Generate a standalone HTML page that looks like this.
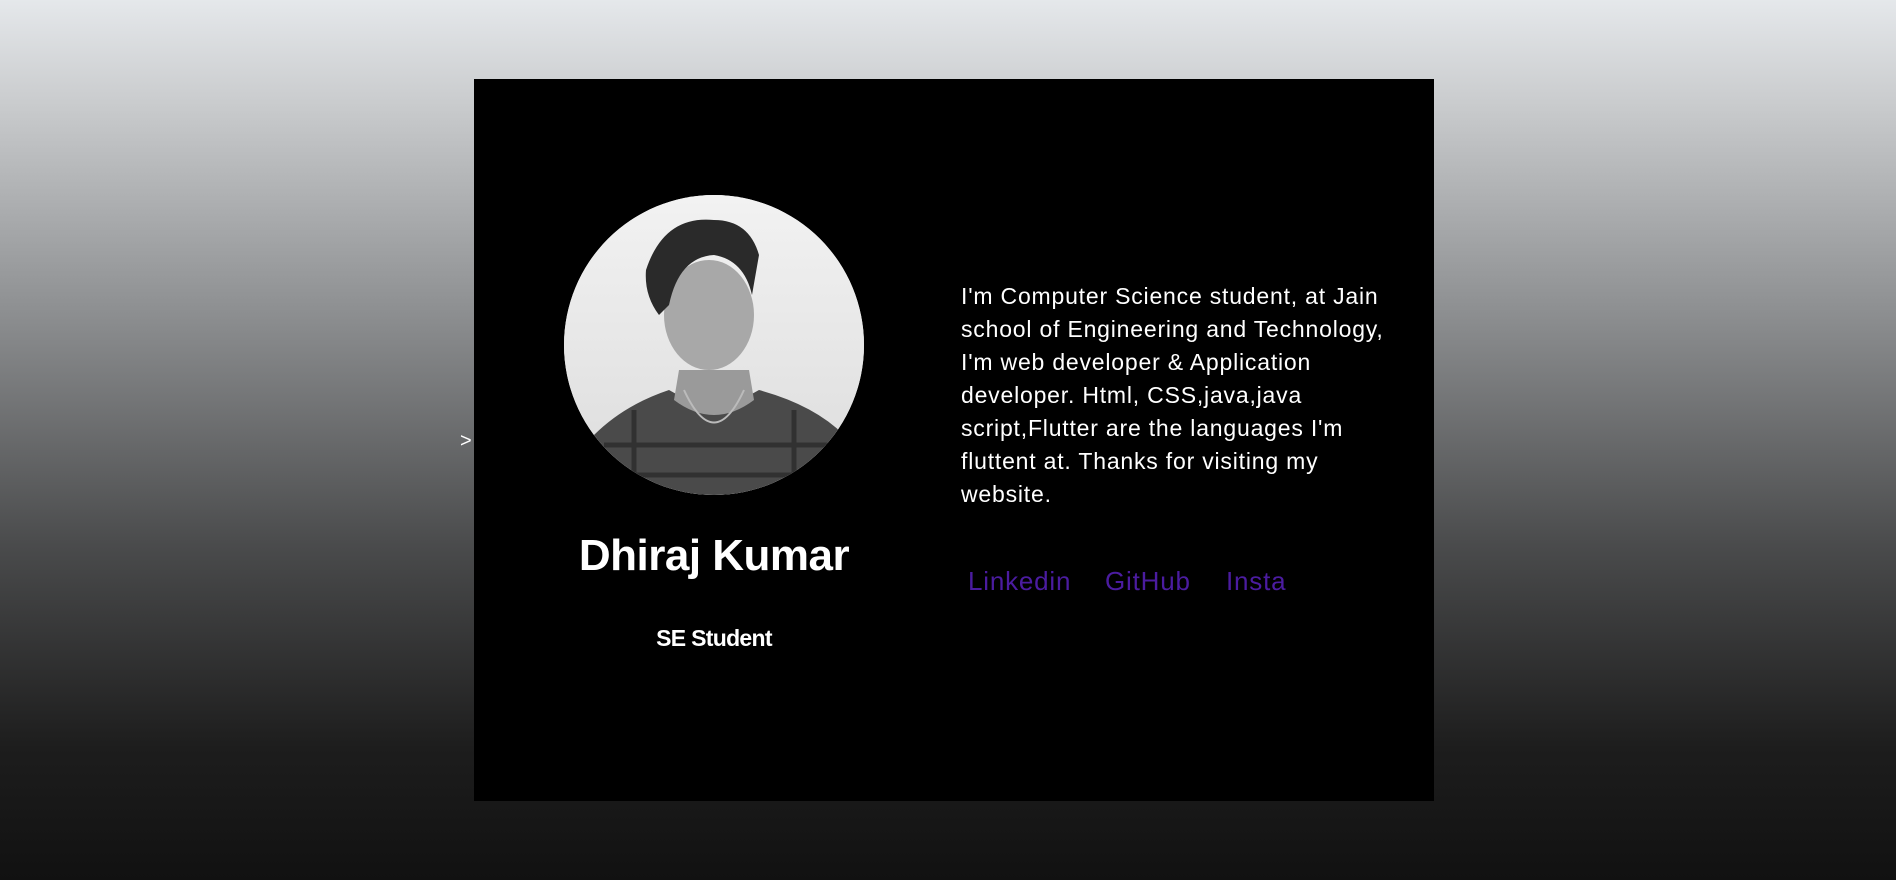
<!DOCTYPE html>
<html><head><meta charset="utf-8"><style>
html,body{margin:0;padding:0;width:1896px;height:880px;overflow:hidden}
body{background:linear-gradient(to bottom,#e5e8eb 0%,#c9cbcd 12%,#8e9092 35%,#4a4b4c 62%,#1d1d1d 85%,#111 100%);position:relative;font-family:"Liberation Sans",sans-serif}
.card{position:absolute;left:474px;top:79px;width:960px;height:722px;background:#000}
.arrow{position:absolute;left:460px;top:430px;color:#fff;font-size:20px}
.photo{position:absolute;left:564px;top:195px;width:300px;height:300px;border-radius:50%;overflow:hidden;background:#eee}
.name{position:absolute;left:474px;width:480px;top:531px;text-align:center;color:#fff;font-size:44px;font-weight:bold;letter-spacing:-0.5px}
.role{position:absolute;left:474px;width:480px;top:625px;text-align:center;color:#fff;font-size:23px;font-weight:bold;letter-spacing:-0.7px}
.about{position:absolute;left:961px;top:280px;color:#fff;font-size:23px;line-height:33px;white-space:nowrap;letter-spacing:0.8px}
.links{position:absolute;top:566px;color:#4b1ca0;font-size:26px;letter-spacing:0.8px}
</style></head><body>
<div class="card"></div>
<div class="arrow">&gt;</div>
<div class="photo">
<svg width="300" height="300" viewBox="0 0 300 300">
<defs><linearGradient id="bg" x1="0" y1="0" x2="0" y2="1"><stop offset="0" stop-color="#f2f2f2"/><stop offset="1" stop-color="#dcdcdc"/></linearGradient></defs>
<rect width="300" height="300" fill="url(#bg)"/>
<path d="M30 240 Q60 210 105 195 L150 220 L195 195 Q250 210 280 240 L300 300 L0 300 Z" fill="#4a4a4a"/>
<path d="M115 175 L110 205 Q150 235 190 205 L185 175 Z" fill="#9a9a9a"/>
<ellipse cx="145" cy="120" rx="45" ry="55" fill="#a8a8a8"/>
<path d="M82 75 Q100 20 150 25 Q185 25 195 60 L188 100 Q180 65 150 60 Q115 62 105 110 L95 120 Q80 100 82 75Z" fill="#2a2a2a"/>
<path d="M120 195 Q150 260 180 195" stroke="#bbb" stroke-width="2" fill="none"/>
<g stroke="#222" stroke-width="5" opacity=".6"><line x1="40" y1="250" x2="280" y2="250"/><line x1="20" y1="280" x2="290" y2="280"/><line x1="70" y1="215" x2="70" y2="300"/><line x1="230" y1="215" x2="230" y2="300"/></g>
</svg></div>
<div class="name">Dhiraj Kumar</div>
<div class="role">SE Student</div>
<div class="about">I'm Computer Science student, at Jain<br>school of Engineering and Technology,<br>I'm web developer &amp; Application<br>developer. Html, CSS,java,java<br>script,Flutter are the languages I'm<br>fluttent at. Thanks for visiting my<br>website.</div>
<div class="links" style="left:968px">Linkedin</div>
<div class="links" style="left:1105px">GitHub</div>
<div class="links" style="left:1226px">Insta</div>
</body></html>
